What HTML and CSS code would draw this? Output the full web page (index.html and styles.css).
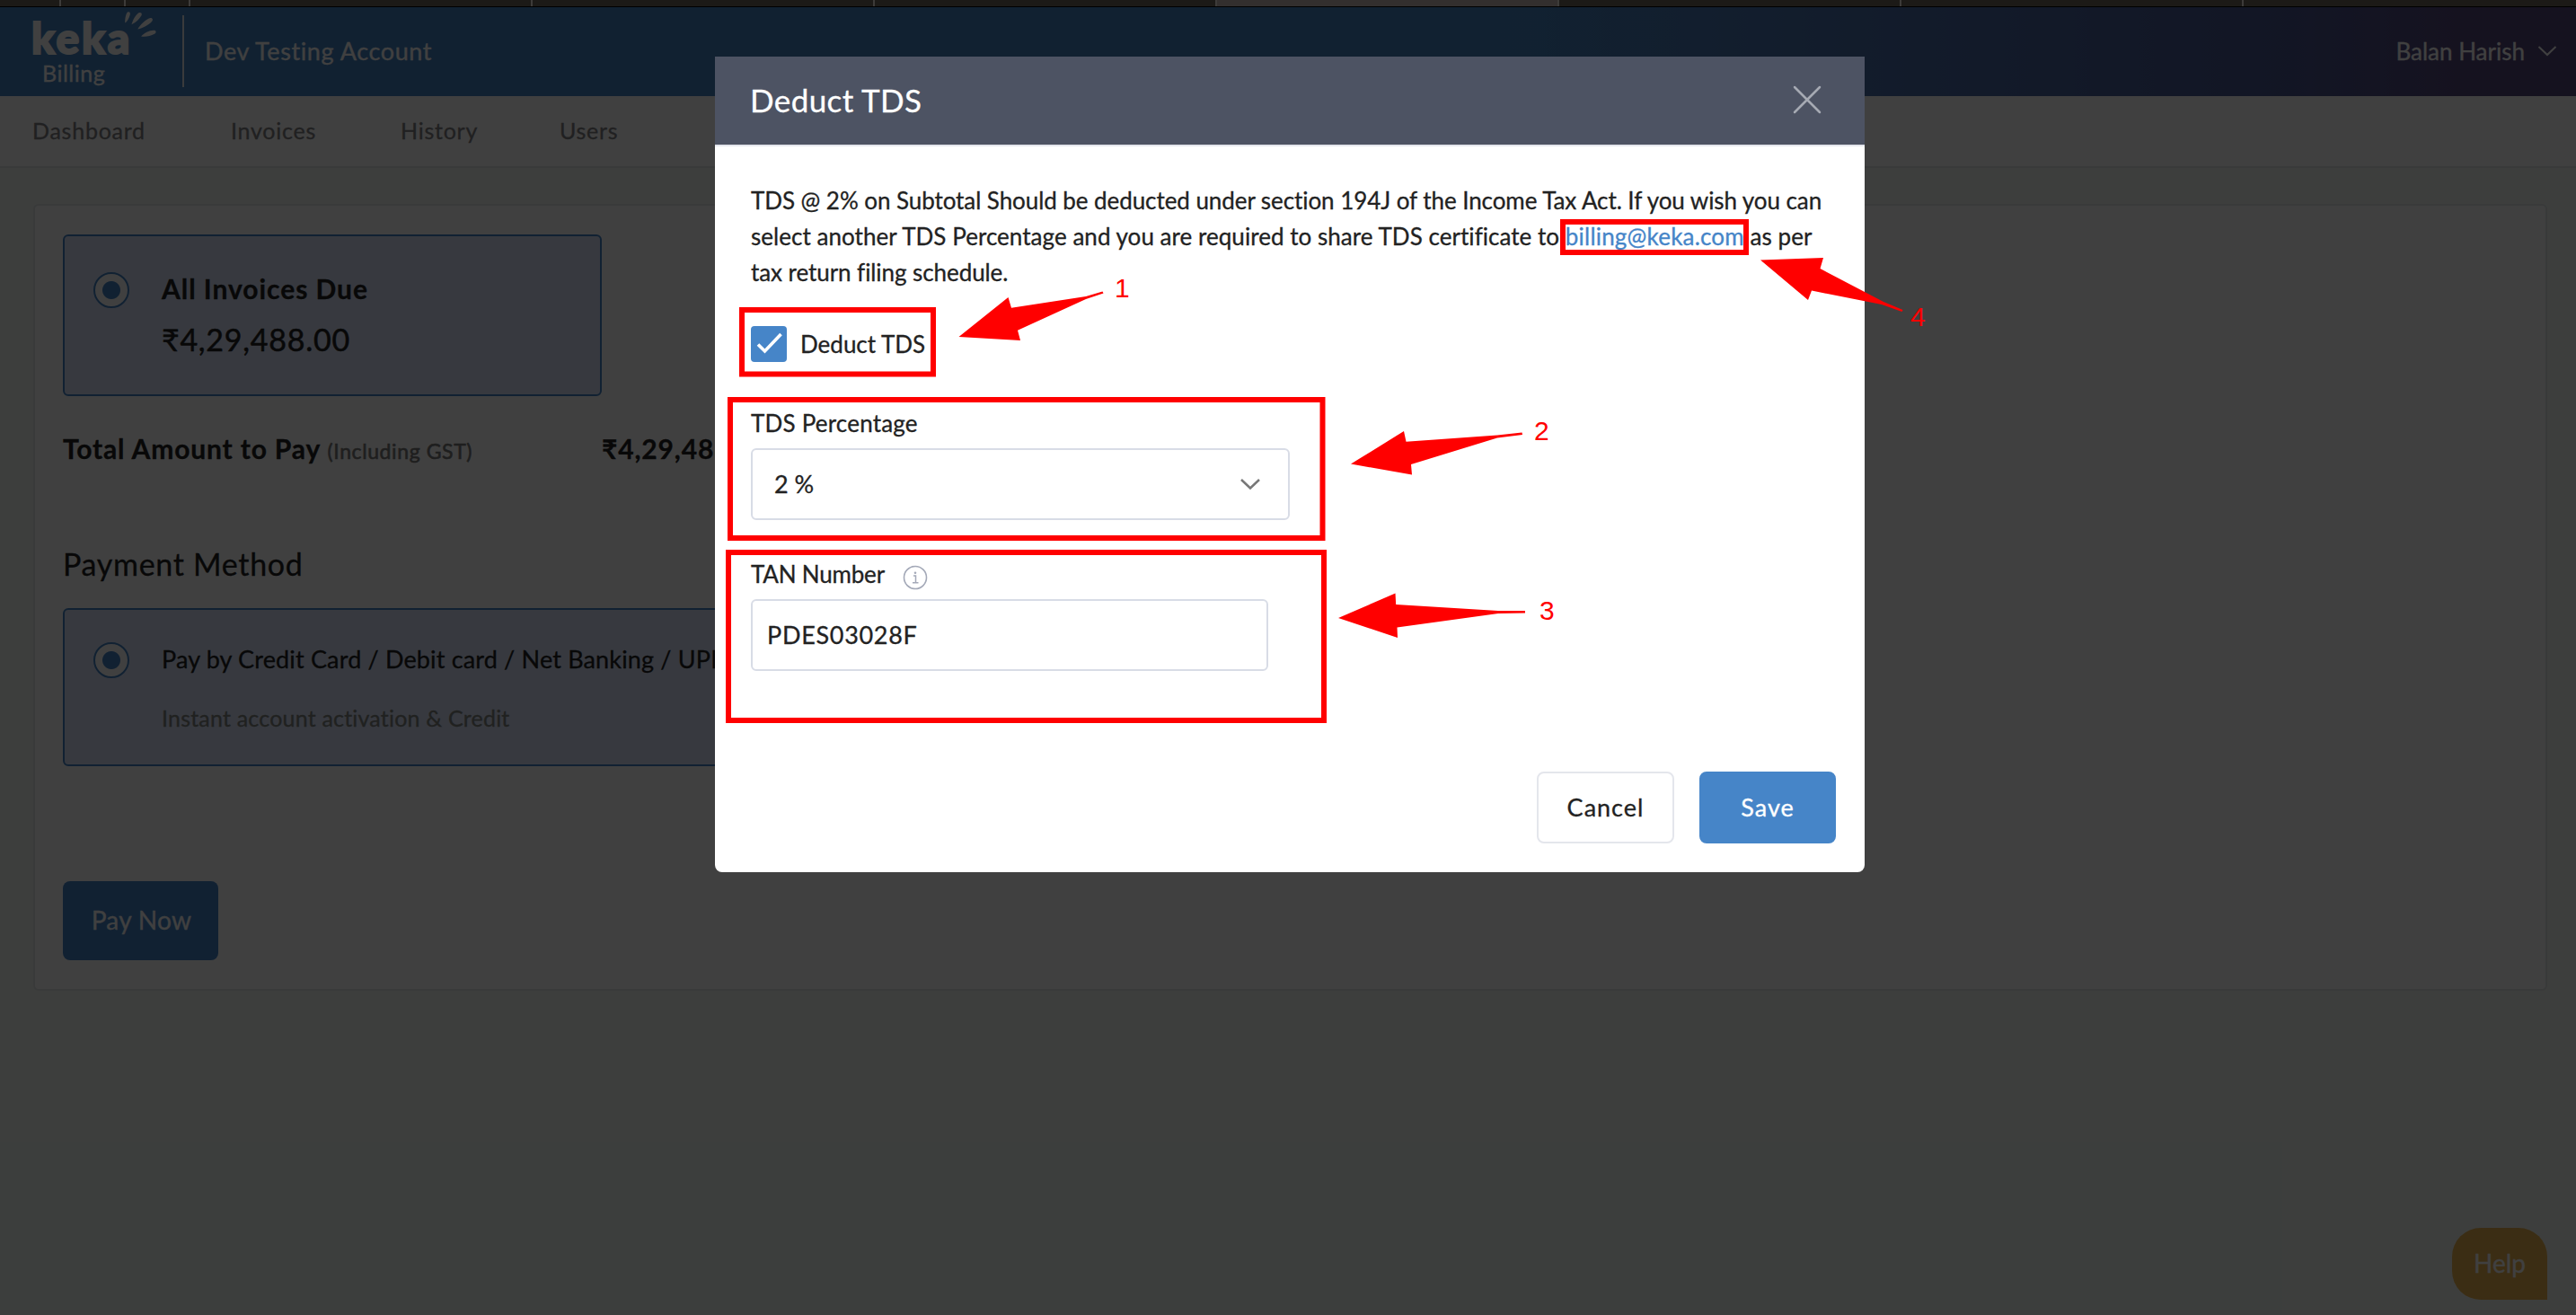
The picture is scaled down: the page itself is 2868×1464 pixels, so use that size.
FILE: index.html
```
<!DOCTYPE html>
<html lang="en">
<head>
    <meta charset="UTF-8">
    <meta name="viewport" content="width=device-width, initial-scale=1.0">
    <title>Keka Billing</title>
    <link rel="stylesheet" href="styles.css">
</head>
<body>
    <div class="tab-strip">
        <span class="tab tab-first"></span>
        <span class="tab tab-small"></span>
        <span class="tab tab-small"></span>
        <span class="tab"></span>
        <span class="tab"></span>
        <span class="tab"></span>
        <span class="tab active"></span>
        <span class="tab"></span>
        <span class="tab"></span>
    </div>

    <div class="app">
        <header class="header">
            <div class="brand">
                <span class="brand-name">keka</span>
                <span class="brand-sub">Billing</span>
                <svg class="brand-rays" width="38" height="32" viewBox="0 0 38 32">
                    <path d="M3.2 13.6 C3 8 4.500 2 6.500 1.200 C9 0.800 9.400 3 8.400 5.500 C7.400 9 5.500 12 3.200 13.600Z"/>
                    <path d="M10.500 15.200 C12 10 15 4.500 18.500 2.300 C21 1.300 22.700 3 21.300 5.600 C19 9.500 15.500 13 10.500 15.200Z"/>
                    <path d="M17.300 20.600 C19.500 16.500 26 9.500 31.300 8.100 C34 7.700 34.600 10.200 33 12.100 C29.500 16 23 19.500 17.300 20.600Z"/>
                    <path d="M21 28.500 C24.500 24.500 31 21.200 36 21.700 C38.200 22.200 38 24.700 36 25.800 C31.500 28.200 26 29.300 21 28.500Z"/>
                </svg>
            </div>
            <div class="account">Dev Testing Account</div>
            <div class="user">
                <span>Balan Harish</span>
                <svg width="22" height="14" viewBox="0 0 22 14">
                    <path d="M1.500 2 L11 11 L20.500 2" fill="none" stroke="#fff" stroke-width="2"/>
                </svg>
            </div>
        </header>

        <nav class="nav">
            <a class="nav-dashboard">Dashboard</a>
            <a class="nav-invoices">Invoices</a>
            <a class="nav-history">History</a>
            <a>Users</a>
        </nav>

        <main class="main">
            <section class="card">
                <div class="option invoices">
                    <span class="radio"></span>
                    <div>
                        <div class="option-title bold">All Invoices Due</div>
                        <div class="amount">₹4,29,488.00</div>
                    </div>
                </div>

                <div class="total">
                    <div class="total-label">Total Amount to Pay <small>(Including GST)</small></div>
                    <div>₹4,29,488.00</div>
                </div>

                <h2 class="section-title">Payment Method</h2>

                <div class="option payment">
                    <span class="radio"></span>
                    <div>
                        <div class="option-title">Pay by Credit Card / Debit card / Net Banking / UPI</div>
                        <div class="option-note">Instant account activation &amp; Credit</div>
                    </div>
                </div>

                <button class="pay-now">Pay Now</button>
            </section>
        </main>

        <div class="help">Help</div>
    </div>

    <div class="backdrop"></div>

    <div class="modal">
        <div class="modal-header">
            <span>Deduct TDS</span>
            <svg width="32" height="32" viewBox="0 0 32 32">
                <path d="M2 2 L30 30 M30 2 L2 30" stroke="#a6aab3" stroke-width="2.500" stroke-linecap="round"/>
            </svg>
        </div>
        <div class="modal-body">
            <p class="info">TDS @ 2% on Subtotal Should be deducted under section 194J of the Income Tax Act. If you wish you can<br><span class="wide">select another TDS Percentage and you are required to share TDS certificate to <a>billing@keka.com</a> as per</span><br>tax return filing schedule.</p>

            <label class="check">
                <span class="check-box">
                    <svg width="40" height="40" viewBox="0 0 40 40">
                        <path d="M8 20.500 L15.500 28 L33.500 9" fill="none" stroke="#fff" stroke-width="3.600"/>
                    </svg>
                </span>
                Deduct TDS
            </label>

            <div class="field">
                <div class="field-label">TDS Percentage</div>
                <div class="select">
                    <span>2 %</span>
                    <svg width="22" height="14" viewBox="0 0 22 14">
                        <path d="M1 2 L11 11.500 L21 2" fill="none" stroke="#777" stroke-width="2.500"/>
                    </svg>
                </div>
            </div>

            <div class="field tan">
                <div class="field-label">TAN Number
                    <svg class="info-icon" width="28" height="28" viewBox="0 0 28 28">
                        <circle cx="14" cy="14" r="12.500" fill="none" stroke="#a4a9b8" stroke-width="1.600"/>
                        <path d="M12 12 H14.500 V19.500 M11 19.800 H17.500" fill="none" stroke="#a4a9b8" stroke-width="1.500"/>
                        <circle cx="14" cy="8.800" r="1.300" fill="#a4a9b8"/>
                    </svg>
                </div>
                <div class="input">PDES03028F</div>
            </div>

            <div class="actions">
                <button class="btn">Cancel</button>
                <button class="btn save">Save</button>
            </div>
        </div>
    </div>

    <!-- step markers -->
    <svg class="markers" width="2868" height="1464" viewBox="0 0 2868 1464">
        <g fill="none" stroke="#f00" stroke-width="6">
            <rect x="826" y="345" width="213" height="71.500"/>
            <rect x="813" y="445" width="659.500" height="154"/>
            <rect x="811" y="615" width="663" height="187"/>
            <rect x="1740" y="247" width="204" height="34"/>
        </g>
        <g fill="#f00">
            <path d="M1067.500 375 L1122.500 331 L1126 342.700 L1209 330 L1227.500 324.500 L1228.500 326.500 L1209 333 L1133 367.700 L1136 379Z"/>
            <path d="M1504 516.500 L1563 480 L1565.500 491.700 L1667 484.500 L1694.500 481.500 L1695 484 L1667 487.500 L1571 517 L1572 528.500Z"/>
            <path d="M1490 688 L1553.500 660.500 L1554.200 673 L1668 680 L1698 680 L1698 682.500 L1668 683 L1555.500 698.500 L1556 710Z"/>
            <path d="M1960 289.500 L2030 287 L2026.500 299 L2097 336 L2118.500 345 L2117.500 347 L2095 339 L2017 323.500 L2013 334Z"/>
        </g>
        <g class="marker-text">
            <text x="1241" y="331">1</text>
            <text x="1708" y="490">2</text>
            <text x="1714" y="690">3</text>
            <text x="2127" y="363">4</text>
        </g>
    </svg>
</body>
</html>
```
FILE: styles.css
```
* {
    box-sizing: border-box;
}

body {
    margin: 0;
    height: 1464px;
    overflow: hidden;
    background-color: #f1f7f4;
    font-family: Lato, "Liberation Sans", sans-serif;
    color: #222;
    -webkit-text-stroke: 0.3px;
}

button {
    font-family: inherit;
    padding: 0;
}

.tab-strip {
    display: flex;
    height: 8px;
    background-color: #1c1a17;
    border-bottom: 1px solid #000;
}

.tab {
    width: 381px;
    border-right: 2px solid #3d3b39;
}

.tab-first {
    width: 68px;
}

.tab-small {
    width: 72px;
}

.tab.active {
    background-color: #332f2e;
}

/* header */
.header {
    display: flex;
    height: 99px;
    padding-left: 37px;
    padding-right: 21px;
    color: white;
    background: linear-gradient(to right, #4685c4 58%, #4a5690 89%, #56487c 96%);
}

.brand {
    position: relative;
    display: flex;
    flex-direction: column;
    width: 168px;
    height: 80px;
    margin-top: 9px;
    padding-top: 5px;
    border-right: 2px solid #e8ecf0;
}

.brand-name {
    font-size: 48px;
    font-weight: 900;
    line-height: 40px;
    letter-spacing: 2.6px;
    margin-left: -2px;
    -webkit-text-stroke: 2px white;
}

.brand-sub {
    padding-left: 10px;
    font-size: 25px;
    line-height: 38px;
    letter-spacing: 0.5px;
}

.brand-rays {
    position: absolute;
    left: 99px;
    top: -5px;
    fill: white;
}

.account {
    margin-left: 23px;
    font-size: 27px;
    line-height: 98px;
    letter-spacing: 0.6px;
}

.user {
    display: flex;
    align-items: center;
    gap: 14px;
    margin-left: auto;
    padding-bottom: 1px;
    font-size: 26px;
}

.nav {
    display: flex;
    height: 80px;
    padding-left: 36px;
    background-color: white;
    border-bottom: 2px solid #e4e6e6;
    font-size: 25px;
    line-height: 76px;
    letter-spacing: 0.75px;
    color: #7f8082;
}

.nav-dashboard {
    width: 221px;
}

.nav-invoices {
    width: 189px;
}

.nav-history {
    width: 177px;
}

/* invoice card */
.main {
    padding: 40px 32px 0 37px;
}

.card {
    height: 876px;
    padding: 32px 31px;
    background-color: white;
    border: 2px solid #e4e6e6;
    border-radius: 6px;
}

.option {
    display: flex;
    gap: 36px;
    background-color: #d9e4fb;
    border: 2px solid #4685c8;
    border-radius: 6px;
    padding-left: 32px;
}

.invoices {
    width: 600px;
    height: 180px;
    padding-top: 38px;
}

.payment {
    width: 1100px;
    height: 176px;
    padding-top: 35px;
    margin-top: 29px;
}

.radio {
    width: 40px;
    height: 40px;
    margin-top: 2px;
    border: 2px solid #4685c8;
    border-radius: 50%;
    background: radial-gradient(circle, #4685c8 9.5px, white 10.5px);
}

.payment .radio {
    margin-top: 1px;
}

.option-title {
    font-size: 27px;
    line-height: 40px;
    letter-spacing: 0.16px;
}

.option-title.bold {
    font-size: 30px;
    font-weight: bold;
    letter-spacing: 0.95px;
}

.amount {
    margin-top: 17px;
    font-size: 34px;
    line-height: 40px;
    letter-spacing: 0.75px;
    -webkit-text-stroke: 0.5px;
}

.option-note {
    margin-top: 25px;
    font-size: 25px;
    line-height: 40px;
    letter-spacing: 0.2px;
    color: #808380;
}

.total {
    display: flex;
    height: 40px;
    margin-top: 38px;
    font-size: 30px;
    font-weight: bold;
    line-height: 40px;
    letter-spacing: 0.85px;
}

.total-label {
    width: 600px;
}

.total small {
    font-size: 23px;
    font-weight: normal;
    letter-spacing: 0.6px;
    color: #7a7a7a;
    -webkit-text-stroke: 0.6px;
}

.section-title {
    margin: 89px 0 0;
    font-size: 34px;
    font-weight: normal;
    line-height: 40px;
    letter-spacing: 0.7px;
}

.pay-now {
    width: 173px;
    height: 88px;
    margin-top: 128px;
    padding: 0 0 2px 2px;
    border: none;
    border-radius: 8px;
    background-color: #4685c8;
    color: white;
    font-size: 28px;
    letter-spacing: 0.3px;
}

.help {
    position: absolute;
    right: 32px;
    bottom: 17px;
    width: 106px;
    height: 80px;
    border-radius: 32px 32px 0 32px;
    background-color: #ecb450;
    color: white;
    font-size: 28px;
    line-height: 78px;
    text-align: center;
}

/* modal */
.backdrop {
    position: absolute;
    top: 8px;
    left: 0;
    right: 0;
    bottom: 0;
    background-color: rgba(0, 0, 0, 0.75);
}

.modal {
    position: absolute;
    top: 63px;
    left: 796px;
    width: 1280px;
    height: 908px;
    background-color: white;
    border-radius: 0 0 8px 8px;
}

.modal-header {
    display: flex;
    align-items: center;
    justify-content: space-between;
    height: 100px;
    padding: 0 48px 2px 39px;
    background-color: #4d5363;
    border-bottom: 2px solid #e5e7ed;
    color: white;
    font-size: 35px;
    letter-spacing: 0.4px;
}

.modal-body {
    padding: 40px 32px 0 40px;
    font-size: 26px;
}

.info {
    margin: 0;
    line-height: 40px;
    letter-spacing: -0.07px;
    white-space: nowrap;
}

.info .wide {
    letter-spacing: 0.04px;
}

.info a {
    color: #4685c8;
    letter-spacing: 0.2px;
}

.check {
    display: flex;
    align-items: center;
    gap: 15px;
    height: 40px;
    margin-top: 40px;
}

.check-box {
    width: 40px;
    height: 40px;
    border-radius: 4px;
    background-color: #4685c8;
}

.field {
    margin-top: 50px;
}

.field.tan {
    margin-top: 42px;
}

.field-label {
    display: flex;
    align-items: center;
    height: 36px;
    letter-spacing: 0.2px;
}

.tan .field-label {
    letter-spacing: -0.2px;
}

.info-icon {
    margin: 8px 0 0 20px;
}

.select, .input {
    display: flex;
    align-items: center;
    justify-content: space-between;
    height: 80px;
    margin-top: 10px;
    padding-bottom: 1px;
    border: 2px solid #d8dce6;
    border-radius: 6px;
    font-size: 27px;
}

.select {
    width: 600px;
    padding-left: 24px;
    padding-right: 31px;
}

.input {
    width: 576px;
    padding-left: 16px;
    letter-spacing: 0.7px;
}

.actions {
    display: flex;
    justify-content: flex-end;
    gap: 28px;
    margin-top: 112px;
}

.btn {
    width: 153px;
    height: 80px;
    padding-bottom: 1px;
    background-color: white;
    border: 2px solid #e4e6ec;
    border-radius: 8px;
    color: #222;
    font-size: 27px;
    letter-spacing: 1px;
}

.btn.save {
    width: 152px;
    background-color: #4685c8;
    border-color: #4685c8;
    color: white;
}

.markers {
    position: absolute;
    top: 0;
    left: 0;
}

.marker-text {
    fill: #f00;
    font-family: "Liberation Sans", sans-serif;
    font-size: 30px;
    -webkit-text-stroke: 0;
}
```
